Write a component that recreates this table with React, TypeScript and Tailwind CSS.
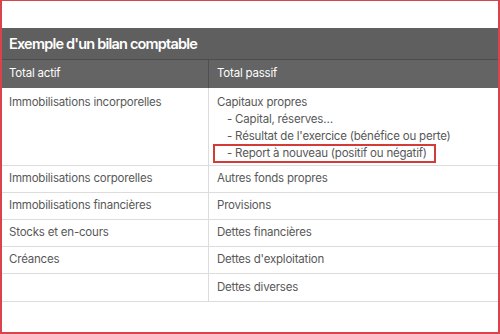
import React from "react";

const rows: [string, React.ReactNode][] = [
  ["Immobilisations corporelles", "Autres fonds propres"],
  ["Immobilisations financières", "Provisions"],
  ["Stocks et en-cours", "Dettes financières"],
  ["Créances", "Dettes d'exploitation"],
  ["", "Dettes diverses"],
];

export default function App() {
  return (
    <div
      className="w-[500px] h-[334px] bg-white border-x-2 border-t border-b-2 border-[#d9434b] flex flex-col text-[#585858]"
      style={{ fontFamily: "Inter, 'Noto Sans', sans-serif" }}
    >
      <div className="h-[27px]" />
      <div className="h-[32px] bg-[#5f5f5f] border-b border-[#4d4d4d] flex items-center pl-[7px] text-white text-[14.5px] font-semibold tracking-[-0.8px]">
        Exemple d'un bilan comptable
      </div>
      <div className="h-[28px] bg-[#646464] grid grid-cols-[207px_1fr] text-white text-[11.5px] tracking-[-0.2px]">
        <div className="flex items-center pl-[7px] border-r border-[#4f4f4f]">Total actif</div>
        <div className="flex items-center pl-[8px]">Total passif</div>
      </div>
      <div className="grid grid-cols-[207px_1fr] text-[11.5px] tracking-[-0.2px] border-b border-[#dcdcdc]">
        <div className="h-[78px] pl-[7px] pt-[6px] border-r border-b border-[#dcdcdc]">
          Immobilisations incorporelles
        </div>
        <div className="h-[78px] pl-[8px] pt-[6px] border-b border-[#dcdcdc] flex flex-col items-start whitespace-nowrap">
          <div className="h-[17px] shrink-0">Capitaux propres</div>
          <div className="h-[17px] shrink-0 pl-[10px]">- Capital, réserves…</div>
          <div className="h-[16px] shrink-0 pl-[10px]">- Résultat de l'exercice (bénéfice ou perte)</div>
          <div className="h-[19px] shrink-0 -ml-[4px] pl-[12px] pr-[7px] border-2 border-[#d23b36] flex items-center">
            - Report à nouveau (positif ou négatif)
          </div>
        </div>
        {rows.map(([a, b], i) => (
          <React.Fragment key={i}>
            <div
              className={`h-[27px] pl-[7px] flex items-center border-r border-[#dcdcdc] ${
                i < rows.length - 1 ? "border-b" : ""
              }`}
            >
              {a}
            </div>
            <div
              className={`h-[27px] pl-[8px] flex items-center border-[#dcdcdc] ${
                i < rows.length - 1 ? "border-b" : ""
              }`}
            >
              {b}
            </div>
          </React.Fragment>
        ))}
      </div>
    </div>
  );
}
